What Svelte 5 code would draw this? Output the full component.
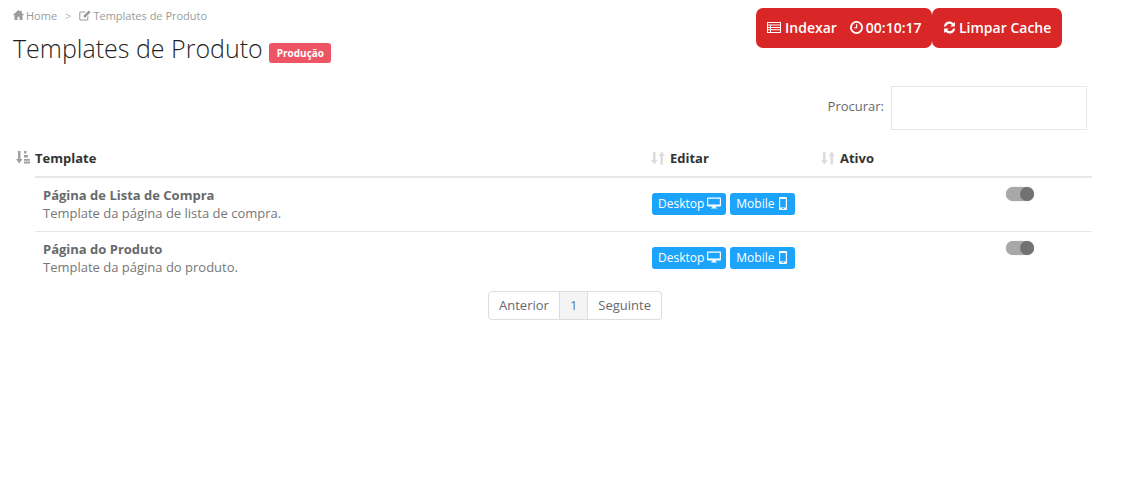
<script>
	const rows = [
		{ name: 'Página de Lista de Compra', desc: 'Template da página de lista de compra.' },
		{ name: 'Página do Produto', desc: 'Template da página do produto.' }
	];
</script>

{#snippet sortIcon(active)}
	<svg class="sort" class:active width="14" height="14" viewBox="0 0 14 14" aria-hidden="true">
		<path d="M2 1h2.500v8h2L3.250 13.500 0 9h2z" />
		{#if active}
			<path d="M8 1h2.500v2.500H8zM8 5h4v2.500H8zM8 9h6v1.800H8zM8 11.500h6v2H8z" />
		{:else}
			<path d="M9.500 13.500H12V5h2L10.750.500 7.500 5h2z" />
		{/if}
	</svg>
{/snippet}

{#snippet desktopIcon()}
	<svg width="14" height="12" viewBox="0 0 14 12" aria-hidden="true">
		<path fill-rule="evenodd" d="M1 .5h12a1 1 0 0 1 1 1v7a1 1 0 0 1-1 1H8.500l.4 1.300h1v.7H4.100v-.7h1l.4-1.300H1a1 1 0 0 1-1-1v-7a1 1 0 0 1 1-1zm.2 1.200v5.800h11.600V1.700z" />
	</svg>
{/snippet}

{#snippet mobileIcon()}
	<svg class="phone" width="8" height="13" viewBox="0 0 8 13" aria-hidden="true">
		<path fill-rule="evenodd" d="M1.300 0h5.400C7.400 0 8 .6 8 1.300v10.400c0 .7-.6 1.300-1.300 1.300H1.300C.6 13 0 12.400 0 11.700V1.300C0 .6.600 0 1.300 0zM1.200 2v8.500h5.600V2zM3.300 11v1h1.400v-1z" />
	</svg>
{/snippet}

<div class="page">
	<header class="top">
		<div class="heading">
			<nav class="crumbs">
				<svg width="11" height="10" viewBox="0 0 11 10" aria-hidden="true">
					<path d="M5.500 0 0 4.800l.5.600L1.500 4.600V10h3V6.800h2V10h3V4.600l1 .8.500-.6L8.800 2.900V.7H7.500v1.100z" />
				</svg>
				<span>Home</span>
				<span class="sep">&gt;</span>
				<svg width="12" height="11" viewBox="0 0 12 11" aria-hidden="true">
					<path d="M1.500 1.500h5.200l-1 1H1.700c-.2 0-.4.200-.4.400v6.200c0 .2.200.4.400.4h6.200c.2 0 .4-.2.400-.4V6.700l1-1v3.600c0 .7-.6 1.200-1.300 1.200H1.500C.8 10.500.3 10 .3 9.300V2.700c0-.7.500-1.200 1.200-1.200z" />
					<path d="M9.800.4 11.600 2.200 6.400 7.400H4.600V5.600z" />
				</svg>
				<span>Templates de Produto</span>
			</nav>
			<div class="title-row">
				<h1>Templates de Produto</h1>
				<span class="badge">Produção</span>
			</div>
		</div>
		<div class="actions">
			<button class="red index" type="button">
				<svg width="14" height="11" viewBox="0 0 14 11" aria-hidden="true">
					<path fill-rule="evenodd" d="M0 0h14v11H0zm1 1v1.500h12V1zm0 2.500V5h2V3.500zm3 0V5h9V3.500zM1 6v1.300h2V6zm3 0v1.300h9V6zM1 8.300V10h2V8.300zm3 0V10h9V8.300z" />
				</svg>
				<span>Indexar</span>
				<svg class="clock" width="13" height="13" viewBox="0 0 12 12" aria-hidden="true">
					<path fill-rule="evenodd" d="M6 0a6 6 0 1 1 0 12A6 6 0 0 1 6 0zm0 1.700a4.300 4.300 0 1 0 0 8.600 4.300 4.300 0 0 0 0-8.600z" />
					<path d="M5.500 3h1.200v3.700H3.800V5.700h1.700z" />
				</svg>
				<span>00:10:17</span>
			</button>
			<button class="red cache" type="button">
				<svg width="13" height="13" viewBox="0 0 13 13" aria-hidden="true">
					<path d="M6.500 .6c1.500 0 2.900.6 3.900 1.600L11.900.9v4.700H7.200l1.700-1.700A3.600 3.600 0 0 0 2.900 5.600H.9A5.700 5.700 0 0 1 6.500 .6z" />
					<path d="M6.500 12.400c-1.500 0-2.900-.6-3.900-1.600L1.100 12.100V7.400h4.700L4.100 9.100a3.600 3.600 0 0 0 6-1.700h2A5.700 5.700 0 0 1 6.500 12.400z" />
				</svg>
				<span>Limpar Cache</span>
			</button>
		</div>
	</header>

	<div class="filter">
		<label for="search">Procurar:</label>
		<input id="search" type="search" />
	</div>

	<div class="table">
		<div class="row head">
			<div class="cell first">
				<span class="sort-slot">{@render sortIcon(true)}</span>
				Template
			</div>
			<div class="cell">
				{@render sortIcon(false)}
				Editar
			</div>
			<div class="cell">
				{@render sortIcon(false)}
				Ativo
			</div>
		</div>
		{#each rows as row}
			<div class="row body">
				<div class="info">
					<strong>{row.name}</strong>
					<span>{row.desc}</span>
				</div>
				<div class="buttons">
					<button class="blue" type="button">Desktop {@render desktopIcon()}</button>
					<button class="blue" type="button">Mobile {@render mobileIcon()}</button>
				</div>
				<div class="toggle-cell">
					<span class="toggle"><span class="knob"></span></span>
				</div>
			</div>
		{/each}
	</div>

	<div class="pager">
		<button type="button">Anterior</button>
		<button type="button" class="current">1</button>
		<button type="button">Seguinte</button>
	</div>
</div>

<style>
	:global(body) {
		background: #fff;
	}

	.page {
		height: 499px;
		box-sizing: border-box;
		font-family: 'Open Sans', sans-serif;
		color: #676a6c;
		overflow: hidden;
	}

	.top {
		display: flex;
		padding: 7px 0 0 13px;
	}

	.heading {
		width: 743px;
	}

	.crumbs {
		display: flex;
		align-items: center;
		height: 16px;
		font-size: 11px;
		color: #999c9e;
		fill: #999c9e;
	}

	.crumbs svg {
		margin-right: 2px;
	}

	.sep {
		margin: 0 8px;
		color: #b5b7b9;
	}

	.title-row {
		display: flex;
		align-items: center;
		margin-top: 9px;
		height: 32px;
	}

	h1 {
		margin: 0;
		font-size: 25px;
		font-weight: 300;
		color: #1f1f1f;
		line-height: 32px;
		white-space: nowrap;
	}

	.badge {
		margin: 9px 0 0 6px;
		padding: 0 7px 0 8px;
		height: 20px;
		line-height: 20px;
		border-radius: 3px;
		background: #ed5565;
		color: #fff;
		font-size: 10px;
		font-weight: 700;
	}

	.actions {
		display: flex;
		margin-top: 1px;
	}

	.red {
		display: flex;
		align-items: center;
		height: 40px;
		border: 0;
		border-radius: 7px;
		background: #d92727;
		color: #fff;
		fill: #fff;
		font-family: inherit;
		font-size: 14px;
		font-weight: 600;
		padding: 0 0 2px;
	}

	.index {
		width: 176px;
		padding-left: 11px;
	}

	.index svg {
		margin-right: 4px;
	}

	.index .clock {
		margin-left: 13px;
		margin-right: 3px;
	}

	.cache {
		width: 130px;
		padding-left: 11px;
	}

	.cache svg {
		margin-right: 3px;
	}

	.filter {
		display: flex;
		justify-content: flex-end;
		align-items: center;
		gap: 7px;
		margin-top: 22px;
		padding-right: 36px;
		font-size: 13px;
	}

	.filter label {
		padding-bottom: 4px;
	}

	.filter input {
		box-sizing: border-box;
		width: 196px;
		height: 44px;
		border: 1px solid #e5e6e7;
		outline: 0;
		background: #fff;
	}

	.table {
		margin: 8px 31px 0 35px;
	}

	.row {
		display: grid;
		grid-template-columns: 617px 170px 1fr;
	}

	.head {
		height: 38px;
		align-items: center;
		border-bottom: 2px solid #e7e7e7;
		font-size: 13px;
		font-weight: 700;
		color: #333;
	}

	.cell {
		display: flex;
		align-items: center;
		gap: 5px;
		position: relative;
		box-sizing: border-box;
		height: 38px;
		padding-top: 2px;
	}

	.cell > .sort {
		margin-left: -1px;
	}

	.sort-slot {
		position: absolute;
		left: -19px;
		top: 12px;
		line-height: 0;
	}

	.sort {
		fill: #dcdcdc;
		flex: none;
	}

	.sort.active {
		fill: #a0a0a0;
	}

	.body {
		height: 54px;
		box-sizing: border-box;
		border-bottom: 1px solid #e7e7e7;
	}

	.body:last-of-type {
		border-bottom: 0;
	}

	.info {
		display: flex;
		flex-direction: column;
		padding: 9px 0 0 8px;
		font-size: 13px;
		line-height: 17px;
	}

	.info span {
		margin-top: 1px;
		color: #777;
	}

	.buttons {
		display: flex;
		gap: 4px;
		padding-top: 15px;
	}

	.blue {
		display: flex;
		align-items: center;
		gap: 3px;
		height: 22px;
		padding: 0 5px 2px 6px;
		border: 0;
		border-radius: 3px;
		background: #1ca4fc;
		color: #fff;
		fill: #fff;
		font-family: inherit;
		font-size: 12px;
	}

	.phone {
		margin: 0 3px 0 2px;
	}

	.toggle-cell {
		padding: 9px 0 0 184px;
	}

	.toggle {
		display: block;
		position: relative;
		width: 28px;
		height: 14px;
		border-radius: 7px;
		background: #a8a8a8;
		box-shadow: 0 0 1px #a8a8a8;
	}

	.knob {
		position: absolute;
		right: 0;
		top: 0;
		width: 14px;
		height: 14px;
		border-radius: 50%;
		background: #727272;
	}

	.pager {
		display: flex;
		justify-content: center;
		margin-top: 5px;
		padding-left: 27px;
	}

	.pager button {
		height: 29px;
		padding: 0 10px 2px;
		border: 1px solid #ddd;
		border-left: 0;
		background: #fff;
		color: #676a6c;
		font-family: inherit;
		font-size: 13px;
	}

	.pager button:first-child {
		border-left: 1px solid #ddd;
		border-radius: 4px 0 0 4px;
	}

	.pager button:last-child {
		border-radius: 0 4px 4px 0;
	}

	.pager .current {
		background: #f4f4f4;
		color: #5b7a99;
	}
</style>
